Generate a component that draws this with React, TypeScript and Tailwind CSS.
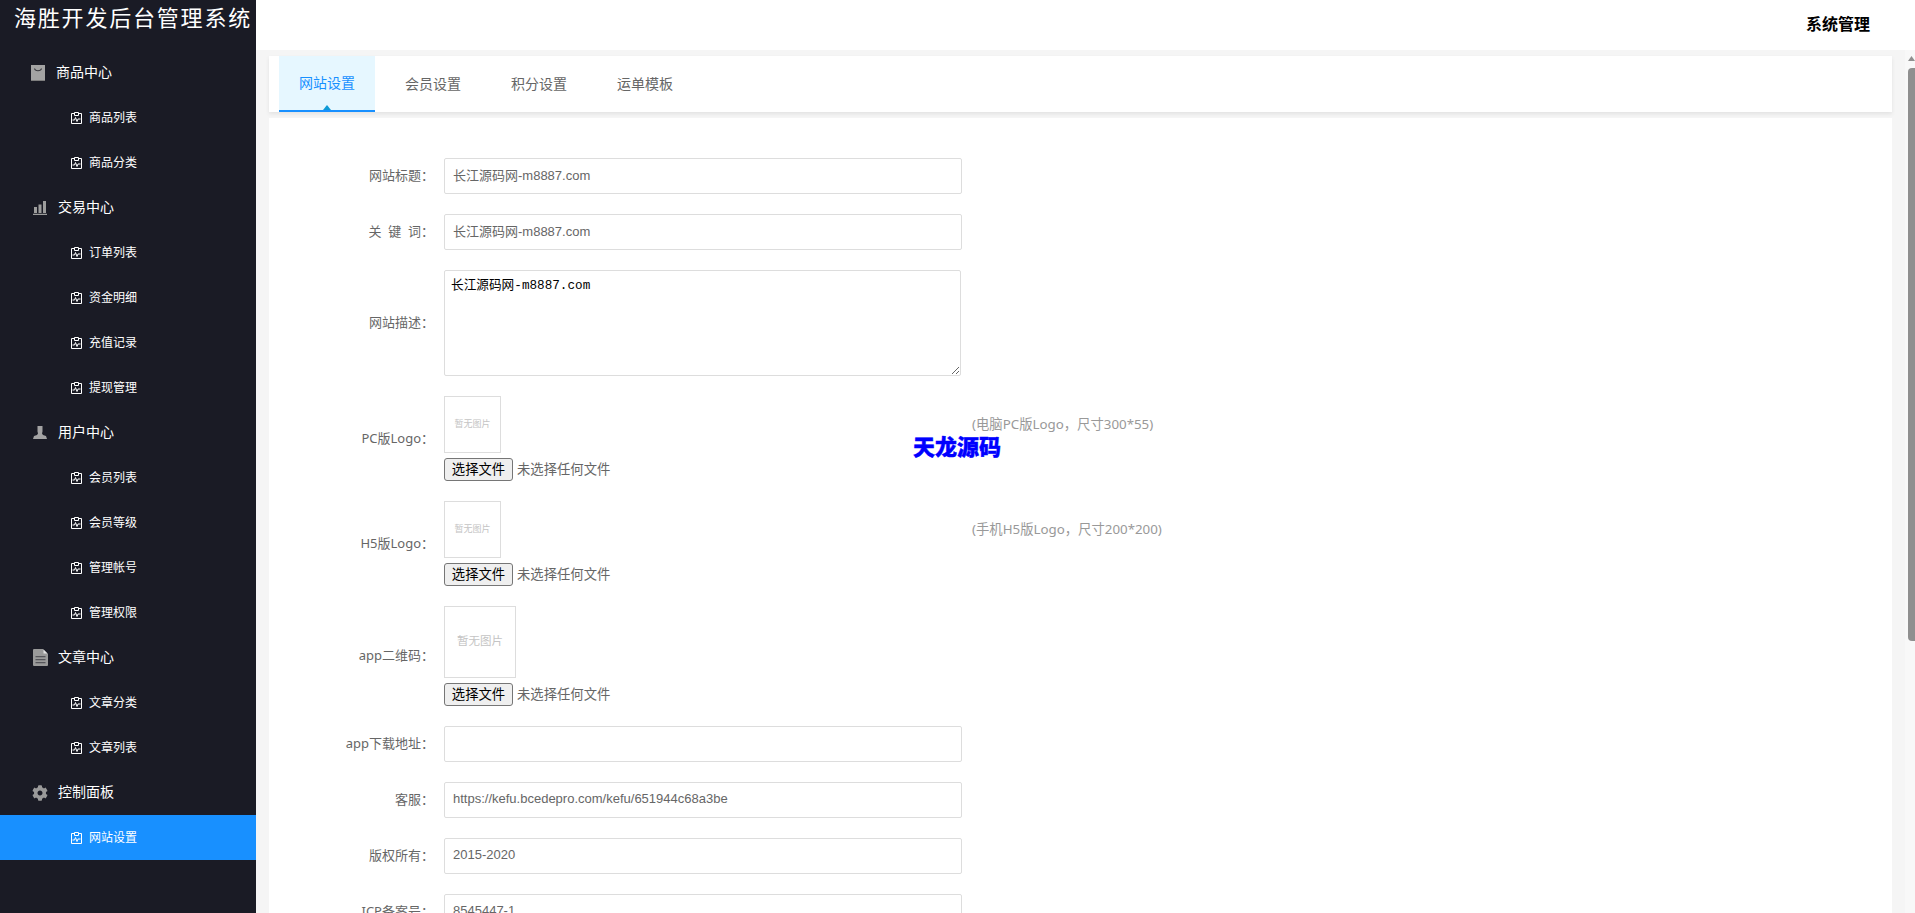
import type { ReactNode } from "react";
import { FaCog } from "react-icons/fa";

const BagIcon = () => (
  <svg width="14" height="16" viewBox="0 0 14 16" className="block">
    <rect width="14" height="16" fill="#a3a3a3" />
    <rect y="15" width="14" height="1" fill="#7d7d7d" />
    <path d="M3.500 3.500c.6 3 6.400 3 7 0" fill="none" stroke="#3a3a3f" strokeWidth="1.100" />
  </svg>
);

const BarsIcon = () => (
  <svg width="14" height="14" viewBox="0 0 14 14" className="ml-[2px] block">
    <path d="M1 6h3v6H1zM5.500 3.500h3V12h-3zM10 0h3v12h-3zM0 12.800h14V14H0z" fill="#9d9d9d" />
  </svg>
);

const UserIcon = () => (
  <svg width="14" height="13" viewBox="0 0 14 13" className="ml-[2px] block">
    <path d="M4.500 0h5v5.500L9 7.500l1 1.500 3 1 1 3H0l1-3 3-1 1-1.500-.5-2z" fill="#a3a3a3" />
  </svg>
);

const DocIcon = () => (
  <svg width="15" height="17" viewBox="0 0 15 17" className="ml-[2px] block">
    <path d="M1 0h9l5 5v11a1 1 0 0 1-1 1H1a1 1 0 0 1-1-1V1a1 1 0 0 1 1-1z" fill="#9a9a9a" />
    <path d="M10.500 0.500v4h4z" fill="#e2e2e2" />
    <path d="M2.500 7h10v1.300h-10zM2.500 10h10v1.300h-10zM2.500 13h10v1.300h-10z" fill="#55555a" />
  </svg>
);

const SubIcon = () => (
  <svg width="11" height="12" viewBox="0 0 11 12" className="block">
    <path d="M3 1.500H.5v10h10v-10H8" fill="none" stroke="#fff" strokeWidth="1" />
    <path d="M3.500.5h4v3h-4z" fill="none" stroke="#fff" strokeWidth="1" />
    <path d="M1.500 8h2l1-2.500 1.500 4 1-2.500h2.500" fill="none" stroke="#fff" strokeWidth="1" />
  </svg>
);

const menu: { title: string; icon: ReactNode; items: string[] }[] = [
  { title: "商品中心", icon: <BagIcon />, items: ["商品列表", "商品分类"] },
  { title: "交易中心", icon: <BarsIcon />, items: ["订单列表", "资金明细", "充值记录", "提现管理"] },
  { title: "用户中心", icon: <UserIcon />, items: ["会员列表", "会员等级", "管理帐号", "管理权限"] },
  { title: "文章中心", icon: <DocIcon />, items: ["文章分类", "文章列表"] },
  {
    title: "控制面板",
    icon: <FaCog className="ml-[1px] block text-[16px] text-[#9a9a9a]" />,
    items: ["网站设置"],
  },
];

const tabs = ["网站设置", "会员设置", "积分设置", "运单模板"];

const Sidebar = () => (
  <aside className="w-[256px] shrink-0 overflow-hidden bg-[#1a1b25] text-white">
    <div className="h-[50px] pt-[4px] pl-[14px] text-[22px] leading-[30px] tracking-[1.800px] whitespace-nowrap">
      海胜开发后台管理系统
    </div>
    {menu.map((group, index) => (
      <div key={group.title}>
        <div className="flex h-[45px] items-center pl-[31px] text-[14px]">
          <span className={index === 0 ? "w-[25px]" : "w-[27px]"}>{group.icon}</span>
          {group.title}
        </div>
        {group.items.map((item) => (
          <div
            key={item}
            className={`flex h-[45px] items-center gap-[7px] pl-[71px] text-[12px] ${
              item === "网站设置" ? "bg-[#1890ff]" : ""
            }`}
          >
            <SubIcon />
            {item}
          </div>
        ))}
      </div>
    ))}
  </aside>
);

const Row = ({ label, children }: { label: string; children: ReactNode }) => (
  <div className="mb-[20px] flex items-center">
    <label className="mr-[10px] w-[165px] shrink-0 text-right font-['Noto_Sans','Noto_Sans_CJK_SC',sans-serif] text-[13px] text-[#666]">
      {label}
    </label>
    {children}
  </div>
);

const TextRow = ({ label, value }: { label: string; value: string }) => (
  <Row label={label}>
    <input
      defaultValue={value}
      className="h-[36px] w-[518px] rounded-[2px] border border-[#ddd] px-[8px] pb-[3px] text-[13px] text-[#666] outline-none"
    />
  </Row>
);

const UploadRow = ({
  label,
  hint,
  size = "small",
}: {
  label: string;
  hint?: string;
  size?: "small" | "large";
}) => (
  <Row label={label}>
    <div className="flex-1">
      <div className="flex items-center">
        <div
          className={
            size === "small"
              ? "flex h-[57px] w-[57px] items-center justify-center border border-[#ddd] text-[9px] text-[#c4c4c4]"
              : "flex h-[72px] w-[72px] items-center justify-center border border-[#ddd] text-[11.500px] text-[#c4c4c4]"
          }
        >
          暂无图片
        </div>
        {hint && (
          <span className="ml-[471px] pt-[1px] font-['Noto_Sans','Noto_Sans_CJK_SC',sans-serif] text-[13.330px] text-[#999]">
            {hint}
          </span>
        )}
      </div>
      <div className="mt-[5px] flex items-center text-[13.330px] text-[#666]">
        <button className="mr-[4px] h-[23px] w-[69px] rounded-[3px] border border-[#767676] bg-[#efefef] text-black">
          选择文件
        </button>
        未选择任何文件
      </div>
    </div>
  </Row>
);

const App = () => (
  <div className="relative flex h-screen overflow-hidden bg-white font-['Liberation_Sans','Noto_Sans_CJK_SC',sans-serif]">
    <Sidebar />
    <div className="flex min-w-0 flex-1 flex-col">
      <header className="flex h-[50px] shrink-0 items-center justify-end bg-white pr-[45px] text-[16px] font-bold text-black">
        系统管理
      </header>
      <div className="flex min-h-0 flex-1">
        <main className="h-full min-w-0 flex-1 overflow-hidden bg-[#f5f5f5] px-[13px] pt-[6px]">
          <nav className="flex h-[56px] gap-[10px] bg-white pl-[10px] text-[14px] text-[#666] shadow-[0_2px_4px_rgba(0,0,0,0.08)]">
            {tabs.map((tab, index) => (
              <div
                key={tab}
                className={
                  index === 0
                    ? "relative flex w-[96px] items-center justify-center border-b-2 border-[#1890ff] bg-[#e6f7ff] text-[#1890ff]"
                    : "flex w-[96px] items-center justify-center"
                }
              >
                {tab}
                {index === 0 && (
                  <span className="absolute bottom-0 left-[44px] border-x-[4px] border-b-[5px] border-x-transparent border-b-[#0f9ad6]" />
                )}
              </div>
            ))}
          </nav>
          <section className="mt-[6px] h-[1171px] bg-white pt-[40px]">
            <TextRow label="网站标题：" value="长江源码网-m8887.com" />
            <TextRow label={"关\u00a0\u00a0键\u00a0\u00a0词："} value="长江源码网-m8887.com" />
            <Row label="网站描述：">
              <textarea
                defaultValue="长江源码网-m8887.com"
                className="h-[106px] w-[517px] rounded-[2px] border border-[#ddd] px-[6px] py-[6px] font-['Liberation_Mono','Noto_Sans_CJK_SC',monospace] text-[12.660px] text-black outline-none"
              />
            </Row>
            <UploadRow label="PC版Logo：" hint="(电脑PC版Logo，尺寸300*55)" />
            <UploadRow label="H5版Logo：" hint="(手机H5版Logo，尺寸200*200)" />
            <UploadRow label="app二维码：" size="large" />
            <TextRow label="app下载地址：" value="" />
            <TextRow label="客服：" value="https://kefu.bcedepro.com/kefu/651944c68a3be" />
            <TextRow label="版权所有：" value="2015-2020" />
            <TextRow label="ICP备案号：" value="8545447-1" />
          </section>
        </main>
        <div className="w-[10px] shrink-0 bg-[#f8f8f8] pl-[3px]">
          <svg width="7" height="5" viewBox="0 0 7 5" className="mt-[6px] block">
            <path d="M3.500 0L7 5H0z" fill="#8f8f8f" />
          </svg>
          <div className="mt-[7px] h-[573px] rounded-l-[4px] bg-[#8f8f8f]" />
        </div>
      </div>
    </div>
    <div className="pointer-events-none absolute top-[436px] left-[913px] text-[22px] leading-[24px] font-black text-[#0000ff] [-webkit-text-stroke:0.4px_#0000ff]">
      天龙源码
    </div>
  </div>
);

export default App;
